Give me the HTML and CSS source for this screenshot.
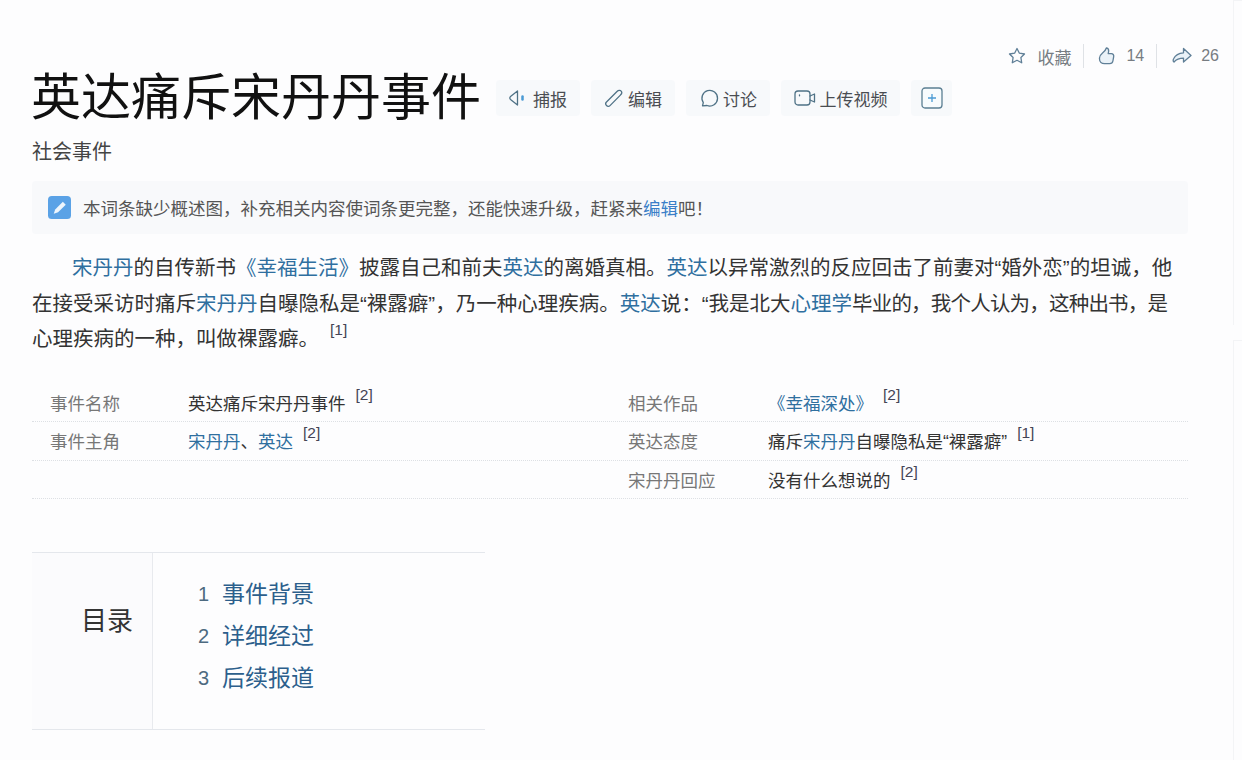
FILE: index.html
```html
<!DOCTYPE html>
<html lang="zh-CN">
<head>
    <meta charset="UTF-8">
    <meta name="viewport" content="width=device-width, initial-scale=1.0">
    <title>英达痛斥宋丹丹事件</title>
    <link rel="stylesheet" href="styles.css">
</head>
<body>
    <div class="page">
        <div class="main">
            <!-- top right counters -->
            <div class="stats">
                <span class="stat">
                    <svg class="stat-icon stat-star" viewBox="0 0 20 20"><path d="M10 2.500l2.400 4.700 5.100.8-3.600 3.500.8 5.300-4.700-2.500-4.700 2.500.8-5.300-3.600-3.500 5.100-.8z"/></svg>
                    <span class="stat-text">收藏</span>
                </span>
                <span class="stat stat-line">
                    <svg class="stat-icon stat-fill" viewBox="0 0 20 20"><path d="M2.500 12c0-2 1.200-3.400 2.800-4.700C7.200 5.800 8.800 4 9.500 1.800c1.600.4 2.400 2 2.100 3.800l-.4 2h3.200c1.500 0 2.600 1.400 2.300 2.900l-.8 4.500c-.3 1.600-1.600 2.700-3.200 2.700H7.500c-2.800 0-5-1.900-5-4.700z"/></svg>
                    <span class="stat-text">14</span>
                </span>
                <span class="stat stat-line stat-last">
                    <svg class="stat-icon stat-fill" viewBox="0 0 20 20"><path d="M11.500 2.500l7.500 7-7.500 6.500v-3.800c-3.800 0-7 1-9.500 3.800-1-.8-1-2-.4-3.200 1.600-3.400 5.200-5.700 9.900-6z"/></svg>
                    <span class="stat-text">26</span>
                </span>
            </div>

            <div class="title-row">
                <h1>英达痛斥宋丹丹事件</h1>
                <a class="tool-btn">
                    <svg class="tool-icon" viewBox="0 0 20 20"><path d="M8.500 3v14L1.500 11.500a2 2 0 0 1 0-3z"/><path class="blue" d="M13.500 8.500v3"/></svg>
                    捕报
                </a>
                <a class="tool-btn">
                    <svg class="tool-icon" viewBox="0 0 20 20"><path d="M2.500 17.500c-1-1-1-2.500 0-3.500L13 3.500c1.400-1.400 3.500-1.400 4.200-.4.800 1 .5 2.800-.8 4L6 17.600c-1 1-2.500 1-3.500-.1z"/></svg>
                    编辑
                </a>
                <a class="tool-btn">
                    <svg class="tool-icon" viewBox="0 0 20 20"><path d="M3.500 17.800l.8-3.200A7.800 7.800 0 1 1 8 17.500z"/></svg>
                    讨论
                </a>
                <a class="tool-btn tool-wide">
                    <svg class="tool-icon icon-wide" viewBox="0 0 22 20"><rect x="1" y="3" width="15" height="14" rx="3"/><path d="M16 8l4.500-2v8L16 12"/><path d="M5.500 7v.8"/></svg>
                    上传视频
                </a>
                <a class="tool-btn tool-plus">
                    <svg class="plus-icon" viewBox="0 0 22 22"><rect x="1" y="1" width="20" height="20" rx="3"/><path class="blue" d="M11 7v8M7 11h8"/></svg>
                </a>
            </div>

            <div class="subtitle">社会事件</div>

            <div class="notice">
                <svg class="notice-icon" viewBox="0 0 24 24"><rect width="24" height="24" rx="4"/><path d="M6 18.500l1.500-4.500 8-8 3 3-8 8z"/></svg>
                <span>本词条缺少概述图，补充相关内容使词条更完整，还能快速升级，赶紧来<a>编辑</a>吧！</span>
            </div>

            <p class="summary"><a>宋丹丹</a>的自传新书<a>《幸福生活》</a>披露自己和前夫<a>英达</a>的离婚真相。<a>英达</a>以异常激烈的反应回击了前妻对“婚外恋”的坦诚，他<br>在接受采访时痛斥<a>宋丹丹</a>自曝隐私是“裸露癖”，乃一种心理疾病。<a>英达</a>说：“我是北大<a>心理学</a><span class="tight">毕业的，我个人认为，这种出书，是</span><br>心理疾病的一种，叫做裸露癖。<sup>[1]</sup></p>

            <div class="info">
                <div class="info-row">
                    <div class="info-cell"><span class="label">事件名称</span><span>英达痛斥宋丹丹事件<sup>[2]</sup></span></div>
                    <div class="info-cell"><span class="label">相关作品</span><span><a>《幸福深处》</a><sup>[2]</sup></span></div>
                </div>
                <div class="info-row">
                    <div class="info-cell"><span class="label">事件主角</span><span><a>宋丹丹</a>、<a>英达</a><sup>[2]</sup></span></div>
                    <div class="info-cell"><span class="label">英达态度</span><span>痛斥<a>宋丹丹</a>自曝隐私是“裸露癖”<sup>[1]</sup></span></div>
                </div>
                <div class="info-row">
                    <div class="info-cell"></div>
                    <div class="info-cell"><span class="label">宋丹丹回应</span><span>没有什么想说的<sup>[2]</sup></span></div>
                </div>
            </div>

            <div class="toc">
                <div class="toc-title">目录</div>
                <ol class="toc-list">
                    <li><span class="toc-num">1</span><a>事件背景</a></li>
                    <li><span class="toc-num">2</span><a>详细经过</a></li>
                    <li><span class="toc-num">3</span><a>后续报道</a></li>
                </ol>
            </div>
        </div>

        <!-- faint side rail -->
        <div class="rail">
            <div class="rail-top"></div>
            <div class="rail-bottom"></div>
        </div>
    </div>
</body>
</html>
```

FILE: styles.css
```css
* {
    box-sizing: border-box;
}
body {
    margin: 0;
    font-family: "Liberation Sans", "Noto Sans CJK SC", sans-serif;
    color: #333;
    background-color: #fdfdfe;
}
a {
    color: #2f6f9f;
    text-decoration: none;
}
sup {
    font-size: 15.5px;
    line-height: 0;
    margin-left: 10px;
    color: #445;
    position: relative;
    top: -3px;
    vertical-align: super;
}
.page {
    display: flex;
    height: 760px;
    overflow: hidden;
}
.main {
    width: 1233px;
    padding: 43px 45px 0 32px;
}

/* counters */
.stats {
    display: flex;
    justify-content: flex-end;
    align-items: center;
    height: 26px;
    margin: 0 -31px 1px 0;
}
.stat {
    display: flex;
    align-items: center;
    height: 24px;
    font-size: 16px;
    color: #777c82;
}
.stat:first-child {
    font-size: 17px;
}
.stat-line {
    margin-left: 12px;
    padding-left: 13px;
    border-left: 1px solid #dfe2e6;
}
.stat-last {
    padding-left: 15px;
}
.stat-icon {
    width: 20px;
    height: 20px;
    margin-right: 9px;
    fill: none;
    stroke: #5f7f97;
    stroke-width: 1.300;
    stroke-linejoin: round;
}
.stat-star {
    margin-right: 10px;
}
.stat-fill {
    fill: #eaf2f8;
}

/* title row */
.title-row {
    display: flex;
    align-items: center;
    gap: 11px;
    height: 56px;
}
h1 {
    margin: 0 4px 1px -1px;
    font-size: 50px;
    font-weight: 400;
    line-height: 56px;
    color: #111;
    white-space: nowrap;
}
.tool-btn {
    display: flex;
    align-items: center;
    justify-content: center;
    gap: 4px;
    width: 84px;
    height: 36px;
    font-size: 17px;
    color: #4a4d52;
    background-color: #f7f9fb;
    border-radius: 4px;
}
.tool-wide {
    width: 119px;
}
.tool-plus {
    width: 41px;
}
.tool-icon {
    width: 20px;
    height: 20px;
    fill: none;
    stroke: #4f7286;
    stroke-width: 1.300;
    stroke-linejoin: round;
    stroke-linecap: round;
}
.icon-wide {
    width: 22px;
}
.tool-icon .blue {
    stroke: #4a9ad4;
    stroke-width: 2.500;
}
.plus-icon {
    width: 22px;
    height: 22px;
    fill: #f7fbfd;
    stroke: #5b7f93;
    stroke-width: 1.300;
}
.plus-icon .blue {
    stroke: #4a9ad4;
}

.subtitle {
    margin-top: 11px;
    font-size: 20px;
    line-height: 30px;
    color: #444;
}

/* notice */
.notice {
    display: flex;
    align-items: center;
    height: 53px;
    margin-top: 14px;
    padding-left: 16px;
    font-size: 17.500px;
    color: #555;
    background-color: #f8f9fb;
    border-radius: 4px;
}
.notice-icon {
    width: 23px;
    height: 23px;
    margin-right: 12px;
    flex: none;
}
.notice-icon rect {
    fill: #5aa2e6;
}
.notice-icon path {
    fill: #eef6fd;
}
.notice a {
    color: #3a7fc8;
}

.summary {
    margin: 16px 0 0;
    font-size: 20.500px;
    line-height: 35.500px;
    text-indent: 40px;
    color: #333;
    white-space: nowrap;
}
.summary .tight {
    letter-spacing: -0.8px;
}
.summary sup {
    margin-left: 11px;
}

/* info table */
.info {
    margin-top: 27px;
    font-size: 17.500px;
    color: #333;
}
.info-row {
    display: flex;
    height: 38.500px;
    border-bottom: 1px dotted #dde0e4;
}
.info-cell {
    display: flex;
    align-items: center;
    width: 578px;
    padding-left: 18px;
    white-space: nowrap;
}
.label {
    width: 138px;
    flex: none;
    color: #777;
}
.info-cell:last-child .label {
    width: 140px;
}

/* contents box */
.toc {
    display: flex;
    width: 453px;
    height: 178px;
    margin-top: 53px;
    border-top: 1px solid #e4e7ec;
    border-bottom: 1px solid #e4e7ec;
}
.toc-title {
    width: 121px;
    padding: 50px 19px 0 0;
    font-size: 26px;
    line-height: 36px;
    text-align: right;
    color: #333;
    background-color: #fbfbfd;
    border-right: 1px solid #e8eaee;
}
.toc-list {
    margin: 20px 0 0;
    padding: 0 0 0 45px;
    list-style: none;
    font-size: 23px;
    line-height: 42px;
}
.toc-list li {
    display: flex;
}
.toc-num {
    width: 24px;
    font-size: 20px;
    color: #4d6a80;
}
.toc-list a {
    color: #2c5f8c;
}

/* side rail */
.rail {
    flex: 1;
    display: flex;
    flex-direction: column;
    gap: 15px;
}
.rail-top,
.rail-bottom {
    border-left: 1px solid #f3f4f6;
    border-top: 1px solid #f3f4f6;
}
.rail-top {
    height: 325px;
}
.rail-bottom {
    flex: 1;
}
```
